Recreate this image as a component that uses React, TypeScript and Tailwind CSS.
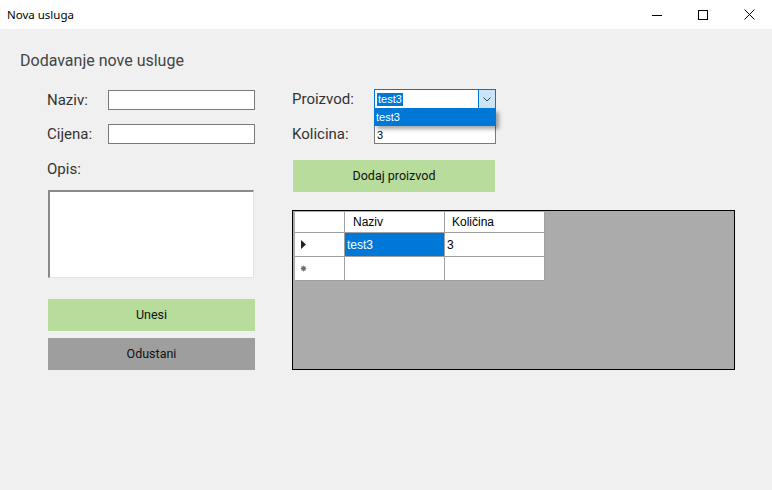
import React from 'react'

const roboto = { fontFamily: 'Roboto, "Noto Sans", sans-serif' }
const winFont = { fontFamily: '"Liberation Sans", Arial, sans-serif' }

function TitleBar() {
  return (
    <div className="flex h-[29px] items-center bg-white">
      <span className="pl-[7px] text-[11.5px] text-black" style={{ fontFamily: '"Noto Sans", "Liberation Sans", sans-serif' }}>
        Nova usluga
      </span>
      <div className="ml-auto flex h-full">
        <div className="flex w-[46px] items-center justify-center">
          <svg width="10" height="10" viewBox="0 0 10 10">
            <line x1="0" y1="5.5" x2="10" y2="5.5" stroke="#000" strokeWidth="1" />
          </svg>
        </div>
        <div className="flex w-[46px] items-center justify-center">
          <svg width="10" height="10" viewBox="0 0 10 10">
            <rect x="0.5" y="0.5" width="9" height="9" fill="none" stroke="#000" strokeWidth="1" />
          </svg>
        </div>
        <div className="flex w-[46px] items-center justify-center">
          <svg width="11" height="11" viewBox="0 0 11 11">
            <path d="M0.5 0.5 L10.5 10.5 M10.5 0.5 L0.5 10.5" stroke="#000" strokeWidth="1" />
          </svg>
        </div>
      </div>
    </div>
  )
}

function TextBox({ value }: { value?: string }) {
  return (
    <div className="flex h-[20px] w-[147px] items-center border border-[#7a7a7a] bg-white px-[2px] text-[11px] text-black" style={winFont}>
      {value}
    </div>
  )
}

function Field({ label, children }: { label: string; children: React.ReactNode }) {
  return (
    <div className="flex h-[20px] items-center">
      <span className="w-[61px] text-[15px] text-[#333]" style={roboto}>{label}</span>
      {children}
    </div>
  )
}

function Combo() {
  return (
    <div className="relative">
      <div className="flex h-[20px] w-[122px] items-center border border-[#0078d7] bg-white pl-[2px]">
        <span className="bg-[#0078d7] px-px text-[11px] leading-[13px] text-white" style={winFont}>test3</span>
        <div className="ml-auto flex h-full w-[17px] items-center justify-center border-l border-[#0078d7] bg-[#cce4f7]">
          <svg width="8" height="5" viewBox="0 0 8 5">
            <path d="M0.5 0.5 L4 4 L7.5 0.5" fill="none" stroke="#444" strokeWidth="1" />
          </svg>
        </div>
      </div>
      <div className="absolute left-0 top-[20px] z-10 flex h-[17px] w-[122px] items-center bg-[#0078d7] pl-[2px] text-[11px] text-white shadow-[3px_3px_4px_rgba(0,0,0,0.35)]" style={winFont}>
        test3
      </div>
    </div>
  )
}

function Grid() {
  return (
    <div className="mt-[18px] h-[160px] w-[443px] border border-black bg-[#ababab] py-px pl-[2px]">
      <div className="w-[251px] text-[12px] text-black" style={winFont}>
        <div className="flex h-[21px]">
          <div className="w-[50px] border-b border-r border-[#a0a0a0] bg-white" />
          <div className="flex w-[100px] items-center border-b border-r border-[#a0a0a0] bg-white pl-[8px]">Naziv</div>
          <div className="flex w-[100px] items-center border-b border-r border-[#a0a0a0] bg-white pl-[7px]">Količina</div>
        </div>
        <div className="flex h-[24px]">
          <div className="flex w-[50px] items-center border-b border-r border-[#a0a0a0] bg-white pl-[6px]">
            <svg width="5" height="9" viewBox="0 0 5 9">
              <path d="M0 0 L5 4.5 L0 9 Z" fill="#222" />
            </svg>
          </div>
          <div className="flex w-[100px] items-center border-b border-r border-[#a0a0a0] bg-[#0078d7] pl-[2px] text-white">test3</div>
          <div className="flex w-[100px] items-center border-b border-r border-[#a0a0a0] bg-white pl-[2px]">3</div>
        </div>
        <div className="flex h-[24px]">
          <div className="flex w-[50px] items-center border-b border-r border-[#a0a0a0] bg-white pl-[5px]">
            <svg width="7" height="7" viewBox="0 0 7 7">
              <circle cx="3.5" cy="3.5" r="2.2" fill="#555" />
              <path d="M3.5 0.5 V6.5 M0.5 3.5 H6.5 M1.3 1.3 L5.7 5.7 M5.7 1.3 L1.3 5.7" stroke="#777" strokeWidth="0.7" />
            </svg>
          </div>
          <div className="w-[100px] border-b border-r border-[#a0a0a0] bg-white" />
          <div className="w-[100px] border-b border-r border-[#a0a0a0] bg-white" />
        </div>
      </div>
    </div>
  )
}

export default function App() {
  return (
    <div className="h-[490px] w-[772px] overflow-hidden bg-[#f0f0f0]">
      <TitleBar />
      <div className="pt-[22px]">
        <h1 className="pl-[20px] text-[16px] leading-[20px] text-[#444]" style={roboto}>
          Dodavanje nove usluge
        </h1>
        <div className="mt-[18px] flex items-start">
          <div className="ml-[47px] flex w-[208px] flex-col pt-px">
            <Field label="Naziv:"><TextBox /></Field>
            <div className="mt-[14px]"><Field label="Cijena:"><TextBox /></Field></div>
            <div className="mt-[15px] h-[20px] text-[15px] leading-[20px] text-[#333]" style={roboto}>Opis:</div>
            <div className="ml-px mt-[11px] h-[88px] w-[206px] border-b border-l-2 border-r border-t-2 border-b-[#e3e3e3] border-l-[#8a8a8a] border-r-[#e3e3e3] border-t-[#8a8a8a] bg-white" />
            <button className="ml-px mt-[21px] h-[32px] w-[207px] bg-[#b8dc9c] text-[12.5px] text-[#111]" style={roboto}>Unesi</button>
            <button className="ml-px mt-[7px] h-[32px] w-[207px] bg-[#9e9e9e] text-[12.5px] text-[#111]" style={roboto}>Odustani</button>
          </div>
          <div className="ml-[37px] flex flex-col">
            <div className="flex h-[20px] items-center">
              <span className="w-[82px] text-[15px] text-[#333]" style={roboto}>Proizvod:</span>
              <Combo />
            </div>
            <div className="mt-[15px] flex h-[20px] items-center">
              <span className="w-[82px] text-[15px] text-[#333]" style={roboto}>Kolicina:</span>
              <div className="flex h-[20px] w-[122px] items-end border border-[#7a7a7a] bg-white px-[2px] pb-[2px] text-[11px] leading-[12px] text-black" style={winFont}>3</div>
            </div>
            <button className="ml-px mt-[16px] h-[32px] w-[202px] bg-[#b8dc9c] text-[12.5px] text-[#111]" style={roboto}>Dodaj proizvod</button>
            <Grid />
          </div>
        </div>
      </div>
    </div>
  )
}
